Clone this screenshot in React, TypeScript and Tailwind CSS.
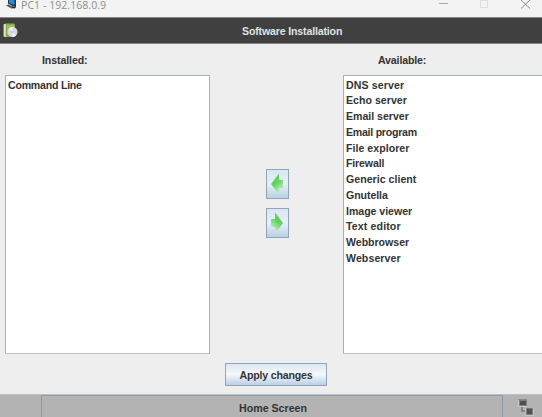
const available: { name: string; tracking: string }[] = [
  { name: "DNS server", tracking: "tracking-[0.1px]" },
  { name: "Echo server", tracking: "tracking-[0.02px]" },
  { name: "Email server", tracking: "tracking-[-0.02px]" },
  { name: "Email program", tracking: "tracking-[-0.26px]" },
  { name: "File explorer", tracking: "tracking-[0.03px]" },
  { name: "Firewall", tracking: "tracking-[-0.15px]" },
  { name: "Generic client", tracking: "tracking-[0.02px]" },
  { name: "Gnutella", tracking: "tracking-[-0.08px]" },
  { name: "Image viewer", tracking: "tracking-[-0.04px]" },
  { name: "Text editor", tracking: "tracking-[0.12px]" },
  { name: "Webbrowser", tracking: "tracking-[-0.03px]" },
  { name: "Webserver", tracking: "tracking-[0.08px]" },
];

function ComputerIcon() {
  return (
    <svg width="13" height="10" viewBox="0 0 13 10" className="block">
      <path d="M3 0h8v7l-3-0.500-5-3z" fill="#26333f" />
      <path d="M4 0h5.500v5l-5.500-2z" fill="#2389dd" />
      <path d="M0.500 5.500l3-1.500 6 3-2.500 2z" fill="#8e999f" />
      <path d="M2 5.500l1.500-0.500 4 2-1 1z" fill="#404b52" />
      <path d="M7 6.500l4 0.500-1 1.500-3-0.500z" fill="#26333f" />
    </svg>
  );
}

function PackageIcon() {
  return (
    <svg width="15" height="16" viewBox="0 0 15 16" className="block">
      <path d="M0.500 1.500l3-1v14l-3-1z" fill="#b9cf7d" />
      <path d="M1 1l1.500 0v13l-1.500-1z" fill="#dfe8bd" />
      <path d="M3 0.500h8l1 1v12.500H3z" fill="#86ad48" />
      <path d="M4 2h7v5L4 12z" fill="#9cc05e" />
      <circle cx="9.500" cy="9" r="5" fill="#d9d9e6" />
      <path d="M9.500 9L6 5.500a5 5 0 0 1 3.500-1.500zM9.500 9l3.500 3.500a5 5 0 0 1-3.500 1.500z" fill="#f5f4f4" />
      <circle cx="9.500" cy="9" r="1.200" fill="#c9c9d0" />
    </svg>
  );
}

function Arrow({ flip = false }: { flip?: boolean }) {
  return (
    <svg width="14" height="22" viewBox="0 0 14 22" className={flip ? "block shrink-0 -scale-x-100" : "block shrink-0"}>
      <defs>
        <linearGradient id={flip ? "right" : "left"} x1="0" y1="0" x2="0.5" y2="1">
          <stop offset="0" stopColor="#48c943" />
          <stop offset="0.55" stopColor="#66d55f" />
          <stop offset="1" stopColor="#c4efca" />
        </linearGradient>
      </defs>
      <path d="M1 11L9 0.500v6.500h4v8H9v6.500z" fill={flip ? "url(#right)" : "url(#left)"} />
    </svg>
  );
}

function NetworkIcon() {
  return (
    <svg width="16" height="17" viewBox="0 0 16 17" shapeRendering="crispEdges" className="block">
      <path d="M4 8v4h4" fill="none" stroke="#858585" strokeWidth="2" />
      <path d="M0 0h9v8H0z" fill="#8b8b8b" />
      <path d="M0 1h1v7H0zM0 7h9v1H0z" fill="#c9c9c9" />
      <path d="M1 1h8v6H1z" fill="#7e7e7e" />
      <path d="M2 2h6v4H2z" fill="#505050" />
      <path d="M7 9h9v8H7z" fill="#c4c4c4" />
      <path d="M8 9h7v7H8z" fill="#7e7e7e" />
      <path d="M9 10h5v5H9z" fill="#505050" />
    </svg>
  );
}

export default function App() {
  return (
    <div className="flex h-[417px] w-[542px] flex-col overflow-hidden bg-[#eeeeee] font-['Liberation_Sans',Arial,sans-serif] text-[10.6px] font-bold text-[#333333]">
      <header className="flex h-[17px] shrink-0 items-start bg-[#f3f3f3] text-[#8d8d8d]">
        <div className="ml-[5px] w-4"><ComputerIcon /></div>
        <span className="whitespace-pre font-['Open_Sans',sans-serif] text-[10.5px] leading-[10px] font-normal tracking-[0.06px]">PC1 - 192.168.0.9</span>
        <svg width="92" height="10" viewBox="0 0 92 10" fill="none" className="ml-auto mr-[11px]">
          <path d="M0 3.500h9" stroke="#aaaaaa" />
          <rect x="41.500" y="0.500" width="7" height="7" stroke="#dedede" />
          <path d="M82 0l9 8.500m0-8.500l-9 8.500" stroke="#8d8d8d" />
        </svg>
      </header>

      <div className="flex h-[27px] shrink-0 items-center border-y border-[#8b8588] bg-[#404040] text-[#dfe2e6]">
        <div className="ml-[3px] w-[15px]"><PackageIcon /></div>
        <h1 className="mt-px ml-[224px] whitespace-nowrap leading-3 tracking-[-0.16px]">Software Installation</h1>
      </div>

      <main className="flex h-[310px] shrink-0 pl-[5px]">
        <section className="w-[205px]">
          <h2 className="h-[31px] pt-[10px] pl-[37px] leading-[13px] tracking-[-0.1px]">Installed:</h2>
          <div className="h-[279px] border border-[#a5b1bf] border-b-[#b8c3cd] bg-white pt-[1.600px] pl-[2px]">
            <div className="h-[15.750px] leading-[15.750px] tracking-[-0.23px]">Command Line</div>
          </div>
        </section>

        <div className="flex w-[133px] flex-col items-center gap-[9px] pt-[125px] pl-px">
          <button className="flex h-[30px] w-[23px] items-center justify-center border border-[#91a3b6] bg-linear-to-b from-[#d9e6f2] via-[#e8eff6] to-[#b9d0e5]" aria-label="Install"><Arrow /></button>
          <button className="flex h-[30px] w-[23px] items-center justify-center border border-[#91a3b6] bg-linear-to-b from-[#d9e6f2] via-[#e8eff6] to-[#b9d0e5]" aria-label="Remove"><Arrow flip /></button>
        </div>

        <section className="w-[199px]">
          <h2 className="h-[31px] pt-[10px] pl-[35px] leading-[13px] tracking-[-0.15px]">Available:</h2>
          <div className="h-[279px] border border-r-0 border-[#a5b1bf] border-b-[#b8c3cd] bg-white pt-[1.600px] pl-[2px]">
            {available.map((item) => (
              <div key={item.name} className={`h-[15.750px] leading-[15.750px] ${item.tracking}`}>{item.name}</div>
            ))}
          </div>
        </section>
      </main>

      <div className="flex h-[40px] shrink-0 justify-center pt-[9px] pl-[10px]">
        <button className="h-[23px] w-[102px] border border-[#91a3b6] bg-linear-to-b from-[#dce7f1] via-[#f4f7fa] to-[#b9d0e5] pt-[2px] leading-[19px] tracking-[-0.2px]">Apply changes</button>
      </div>

      <footer className="flex h-[23px] shrink-0 border-t border-[#b8c2cb] bg-[#b3b3b3]">
        <div className="w-[41px]" />
        <button className="h-[22px] w-[462px] border-x border-t border-[#929ca5] pt-[3px] pl-[2px] leading-[18px] tracking-[0.02px]">Home Screen</button>
        <div className="pt-[4px] pl-[15px]"><NetworkIcon /></div>
      </footer>
    </div>
  );
}
